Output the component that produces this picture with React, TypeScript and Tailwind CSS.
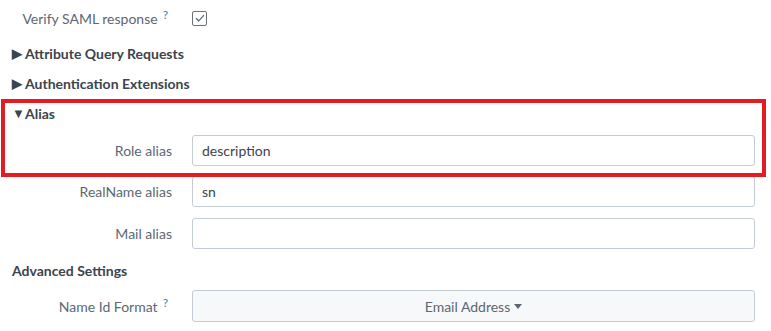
import React from "react";

const font = { fontFamily: '"Lato", "Liberation Sans", sans-serif' };

function Help() {
  return <span className="ml-[5px] text-[12px] leading-none text-[#2f86c0] relative top-[-5px]">?</span>;
}

function Field({ label, help, children, className = "" }: { label: string; help?: boolean; children: React.ReactNode; className?: string }) {
  return (
    <div className={`flex items-center ${className}`}>
      <label className={`w-[160px] shrink-0 text-right text-[14px] text-[#5c6773] ${help ? "pr-[4px]" : ""}`}>
        {label}
        {help && <Help />}
      </label>
      <div className="ml-[20px] flex-1 flex items-center">{children}</div>
    </div>
  );
}

function TextInput({ value }: { value: string }) {
  return (
    <div className="h-[31px] w-full rounded-[3px] border border-[#c3cbd4] bg-white px-[9px] flex items-center text-[14px] text-[#3c444d]">
      {value}
    </div>
  );
}

function Section({ title, open }: { title: string; open?: boolean }) {
  return (
    <div className="h-[30px] flex items-center text-[14px] font-bold text-[#3c444d]">
      <span className="w-[13px] text-[13px] leading-none">{open ? "▼" : "▶"}</span>
      {title}
    </div>
  );
}

export default function App() {
  return (
    <div className="w-[771px] h-[331px] bg-white pl-[12px] pr-[16px] overflow-hidden" style={font}>
      <Field label="Verify SAML response" help className="h-[36px]">
        <div className="w-[15px] h-[15px] rounded-[2px] border border-[#6b737b] flex items-center justify-center">
          <svg width="10" height="8" viewBox="0 0 10 8" fill="none">
            <path d="M1 4.2 L3.7 6.8 L9 1.2" stroke="#5c6773" strokeWidth="1.2" />
          </svg>
        </div>
      </Field>
      <div className="pt-[2px]">
        <Section title="Attribute Query Requests" />
        <Section title="Authentication Extensions" />
      </div>
      <div className="relative">
        <Section title="Alias" open />
        <Field label="Role alias" className="mt-[7px]">
          <TextInput value="description" />
        </Field>
        <div className="absolute left-[-11px] right-[-11px] top-[1px] bottom-[-11px] border-[4px] border-[#e31b23] pointer-events-none" />
      </div>
      <Field label="RealName alias" className="mt-[10px]">
        <TextInput value="sn" />
      </Field>
      <Field label="Mail alias" className="mt-[11px]">
        <TextInput value="" />
      </Field>
      <div className="mt-[6px]">
        <div className="h-[30px] flex items-center text-[14px] font-bold text-[#3c444d]">Advanced Settings</div>
      </div>
      <Field label="Name Id Format" help className="mt-[5px]">
        <div className="h-[32px] w-full rounded-[3px] border border-[#c3cbd4] bg-[#f7f8fa] flex items-center justify-center text-[14px] text-[#5c6773]">
          Email Address
          <svg className="ml-[4px]" width="8" height="5" viewBox="0 0 8 5">
            <path d="M0 0 H8 L4 5 Z" fill="#5c6773" />
          </svg>
        </div>
      </Field>
    </div>
  );
}
